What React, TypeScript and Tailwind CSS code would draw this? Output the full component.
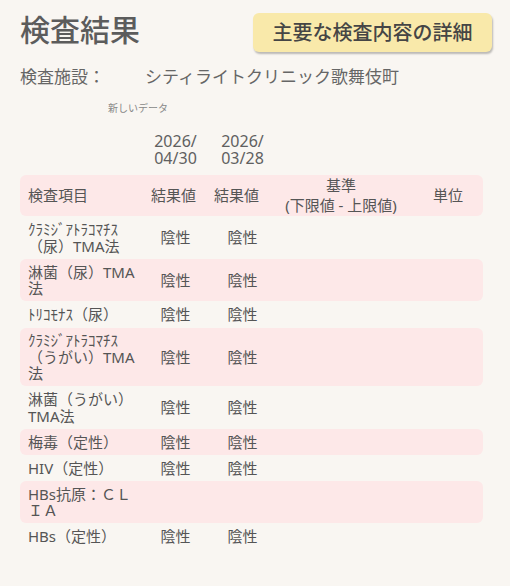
import type { FC } from 'react';

interface ResultRow {
  name: string;
  first?: string;
  second?: string;
}

const rows: ResultRow[] = [
  { name: 'ｸﾗﾐｼﾞｱﾄﾗｺﾏﾁｽ（尿）TMA法', first: '陰性', second: '陰性' },
  { name: '淋菌（尿）TMA法', first: '陰性', second: '陰性' },
  { name: 'ﾄﾘｺﾓﾅｽ（尿）', first: '陰性', second: '陰性' },
  { name: 'ｸﾗﾐｼﾞｱﾄﾗｺﾏﾁｽ（うがい）TMA法', first: '陰性', second: '陰性' },
  { name: '淋菌（うがい）TMA法', first: '陰性', second: '陰性' },
  { name: '梅毒（定性）', first: '陰性', second: '陰性' },
  { name: 'HIV（定性）', first: '陰性', second: '陰性' },
  { name: 'HBs抗原：ＣＬＩＡ' },
  { name: 'HBs（定性）', first: '陰性', second: '陰性' },
];

const grid = 'grid grid-cols-[125px_61px_73px_124px_1fr]';

const App: FC = () => {
  return (
    <div
      className="min-h-[586px] w-[510px] bg-[#f9f6f2] px-5 text-[#555]"
      style={{ fontFamily: '"Noto Sans", "Noto Sans CJK JP", sans-serif' }}
    >
      <div className="flex items-start justify-between pt-[10px]">
        <h1 className="text-[30px] leading-[40px] font-medium text-[#5c5c5c]">
          検査結果
        </h1>
        <button
          type="button"
          className="mt-[3px] mr-[-2px] flex h-[39px] w-[239px] items-center justify-center rounded-[6px] bg-[#f9e9aa] text-[20px] font-medium text-[#454545] shadow-[1px_2px_2px_rgba(0,0,0,0.25)]"
        >
          主要な検査内容の詳細
        </button>
      </div>

      <div className="mt-[13px] flex text-[17px] leading-[24px] text-[#666]">
        <span className="w-[125px]">検査施設：</span>
        <span>シティライトクリニック歌舞伎町</span>
      </div>

      <p className="mt-[12px] pl-[88px] text-[10px] leading-[14px] text-[#888]">
        新しいデータ
      </p>

      <div className={`${grid} mt-[18px] w-[463px] text-[16px] leading-[16.5px] text-[#606060]`}>
        <span />
        <span className="text-center">
          2026/
          <br />
          04/30
        </span>
        <span className="text-center">
          2026/
          <br />
          03/28
        </span>
      </div>

      <div className="mt-[9px] flex w-[463px] flex-col gap-[0.5px] text-[15px] leading-[16.5px]">
        <div className={`${grid} items-center rounded-[6px] bg-[#fde8e8] py-[1px] leading-[19.5px]`}>
          <span className="pl-2">検査項目</span>
          <span className="pl-[6px]">結果値</span>
          <span className="pl-[8px]">結果値</span>
          <span className="text-center">
            基準
            <br />
            (下限値 - 上限値)
          </span>
          <span className="pl-[30px]">単位</span>
        </div>

        {rows.map((row, i) => (
          <div
            key={row.name}
            className={`${grid} items-center rounded-[6px] py-[4.5px] ${
              i % 2 === 1 ? 'bg-[#fde8e8]' : ''
            }`}
          >
            <span className="pr-[9px] pl-2">{row.name}</span>
            <span className="text-center">{row.first}</span>
            <span className="text-center">{row.second}</span>
            <span />
            <span />
          </div>
        ))}
      </div>
    </div>
  );
};

export default App;
